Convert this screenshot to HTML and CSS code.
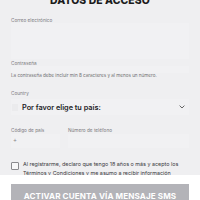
FILE: index.html
```html
<!DOCTYPE html>
<html lang="es">
<head>
<meta charset="utf-8">
<link rel="stylesheet" href="styles.css">
</head>
<body>
<div class="page">
  <div class="form">
    <h2 class="title">DATOS DE ACCESO</h2>
    <div class="field">
      <div class="label">Correo electrónico</div>
      <div class="input email"></div>
    </div>
    <div class="field">
      <div class="label">Contraseña</div>
      <div class="input pass"></div>
    </div>
    <div class="hint">La contraseña debe incluir min 8 caracteres y al menos un número.</div>
    <div class="field country">
      <div class="label">Country</div>
      <div class="select">
        <span class="flag"></span>
        <span class="select-text">Por favor elige tu país:</span>
        <svg class="chev" width="6" height="4" viewBox="0 0 6 4"><path d="M0.6 0.6 L3 3 L5.4 0.6" fill="none" stroke="#555" stroke-width="0.9"/></svg>
      </div>
    </div>
    <div class="phone">
      <div class="col code">
        <div class="label">Código de país</div>
        <div class="input small">+</div>
      </div>
      <div class="col num">
        <div class="label">Número de teléfono</div>
        <div class="input small"></div>
      </div>
    </div>
    <div class="terms">
      <span class="box"></span>
      <p class="terms-text">Al registrarme, declaro que tengo 18 años o más y acepto los Términos y Condiciones y me asumo a recibir información comercial.</p>
    </div>
  </div>
  <div class="actions">
    <button class="btn">ACTIVAR CUENTA VÍA MENSAJE SMS</button>
  </div>
</div>
</body>
</html>
```
FILE: styles.css
```css
* { box-sizing: border-box; }
html, body { margin: 0; padding: 0; }
body {
  width: 200px;
  height: 200px;
  overflow: hidden;
  background: #ffffff;
  font-family: Inter, "Liberation Sans", sans-serif;
}
.page { display: flex; flex-direction: column; }
.form {
  background: #efeff1;
  padding: 0 11px;
  height: 175px;
  overflow: hidden;
}
.title {
  margin: -5px 0 10px;
  text-align: center;
  font-size: 10.4px;
  line-height: 12px;
  font-weight: 800;
  color: #1c1c1c;
  letter-spacing: 0.1px;
}
.field { display: flex; flex-direction: column; }
.label {
  font-size: 4.7px;
  line-height: 6px;
  color: #7a7a7e;
}
.input {
  background: #f1f1f3;
}
.input.email { height: 36px; margin-bottom: 1px; }
.input.pass { height: 7px; }
.hint {
  font-size: 4.6px;
  line-height: 6px;
  color: #6f6f73;
}
.country { margin-top: 11px; }
.select {
  display: flex;
  align-items: center;
  height: 16px;
  margin-top: 3px;
  background: #f1f1f3;
}
.flag {
  width: 6px;
  height: 7px;
  margin-left: 1px;
  background: #ebebed;
}
.select-text {
  margin-left: 4px;
  font-size: 7.3px;
  font-weight: 600;
  color: #222226;
}
.chev { margin-left: auto; margin-right: 4px; }
.phone {
  display: flex;
  gap: 8px;
  margin-top: 12px;
}
.col { display: flex; flex-direction: column; }
.code { width: 49px; }
.num { flex: 1; }
.input.small {
  height: 14px;
  margin-top: 1px;
  font-size: 6px;
  line-height: 8px;
  color: #888;
  padding: 2px 2px;
}
.terms {
  display: flex;
  align-items: flex-start;
  gap: 4px;
  margin-top: 11.5px;
}
.box {
  flex: none;
  width: 8px;
  height: 8px;
  border: 0.8px solid #8a8a8e;
  border-radius: 1px;
  background: #f7f7f8;
  margin-top: 2.5px;
}
.terms-text {
  margin: 0;
  font-size: 5.4px;
  line-height: 9px;
  color: #3a3a3e;
}
.actions {
  padding: 9px 11px 0;
  background: #ffffff;
}
.btn {
  display: block;
  width: 100%;
  height: 24px;
  border: none;
  background: #b3b3b8;
  color: #ffffff;
  font-family: Inter, "Liberation Sans", sans-serif;
  font-size: 8.1px;
  font-weight: 700;
  letter-spacing: 0.1px;
  white-space: nowrap;
  text-align: center;
  padding: 0;
}
```
